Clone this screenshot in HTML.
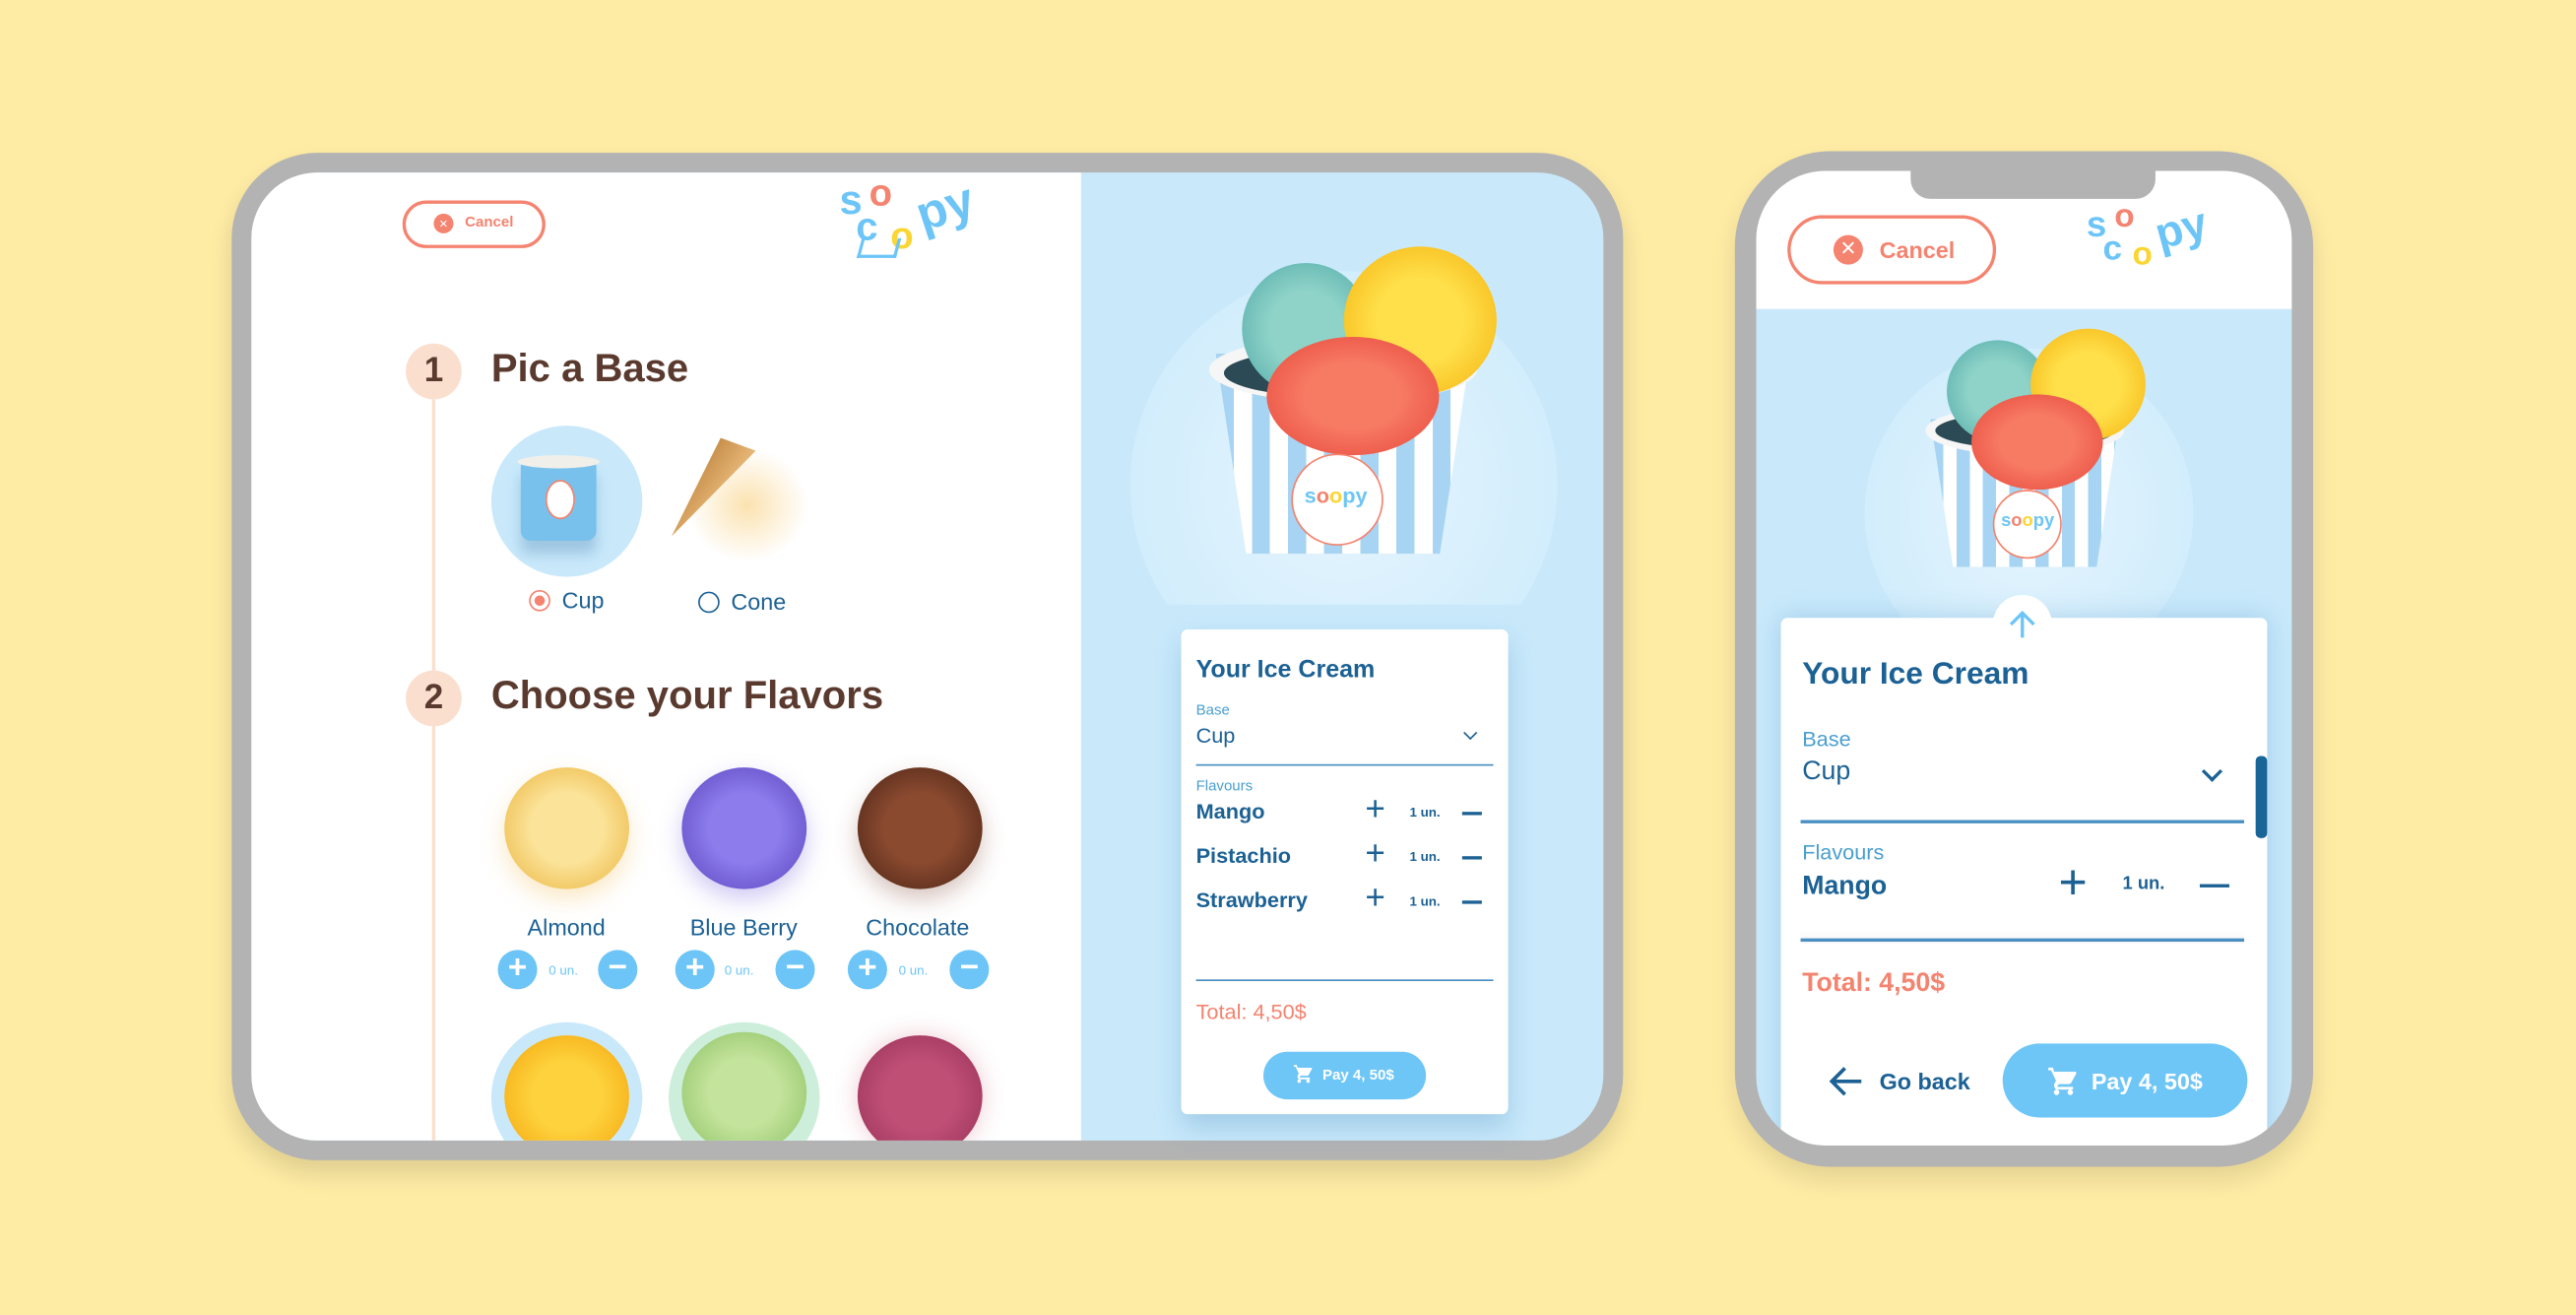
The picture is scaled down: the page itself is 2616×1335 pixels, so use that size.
<!DOCTYPE html>
<html><head><meta charset="utf-8"><style>
*{margin:0;padding:0;box-sizing:border-box}
html,body{width:2616px;height:1334px;overflow:hidden;background:#feeba4}
#w{position:absolute;left:0;top:0;width:1568px;height:800px;transform:scale(1.66837);transform-origin:0 0;font-family:"Liberation Sans",sans-serif}
.a{position:absolute}
.t{position:absolute;white-space:nowrap;font-weight:bold}
.b{color:#1c6194}
.scoop{position:absolute;border-radius:50%}
.pl{position:absolute;width:24px;height:24px;border-radius:50%;background:#6cc5f6;color:#fff;font-size:20px;line-height:23px;text-align:center;font-weight:bold}
</style></head><body><div id="w">

<!-- TABLET -->
<div class="a" style="left:141px;top:93px;width:847px;height:613px;border-radius:52px;background:#b3b3b3;box-shadow:0 8px 14px rgba(0,0,0,.12)"></div>
<div class="a" style="left:153px;top:105px;width:823px;height:589px;border-radius:40px;background:#c9e9fb;overflow:hidden">
 <div class="a" style="left:0;top:0;width:505px;height:589px;background:#fff"></div>
</div>
<!-- cancel -->
<div class="a" style="left:245px;top:122px;width:87px;height:29px;border:2px solid #f4836f;border-radius:15px"></div>
<div class="a" style="left:264px;top:130px;width:12px;height:12px;border-radius:50%;background:#f4836f;color:#fff;font-size:9px;line-height:12px;text-align:center">×</div>
<div class="t" style="left:283px;top:130px;font-size:9px;color:#f4836f">Cancel</div>
<!-- logo -->
<div class="t" style="left:511px;top:108px;font-size:25px;color:#6cc5f6">s</div>
<div class="t" style="left:529px;top:104px;font-size:23px;color:#f4836f">o</div>
<div class="t" style="left:521px;top:125px;font-size:24px;color:#6cc5f6">c</div>
<div class="t" style="left:542px;top:130px;font-size:23px;color:#fbd532">o</div>
<div class="t" style="left:558px;top:110px;font-size:30px;color:#6cc5f6;transform:rotate(-18deg)">py</div>
<div class="a" style="left:523px;top:145px;width:24px;height:12px;border:2px solid #6cc5f6;border-top:none;transform:skewX(-15deg)"></div>
<!-- step 1 -->
<div class="a" style="left:263px;top:243px;width:2px;height:451px;background:#fadfcf"></div>
<div class="a" style="left:247px;top:209px;width:34px;height:34px;border-radius:50%;background:#fadfcf;color:#5a3a2e;font-size:21px;font-weight:bold;text-align:center;line-height:34px">1</div>
<div class="t" style="left:299px;top:211px;font-size:24px;color:#5a3a2e">Pic a Base</div>
<div class="a" style="left:299px;top:259px;width:92px;height:92px;border-radius:50%;background:#c9e9fb"></div>
<div class="a" style="left:317px;top:281px;width:46px;height:48px;background:#78c1ec;border-radius:3px 3px 6px 6px;box-shadow:0 8px 8px rgba(60,120,170,.3)"></div>
<div class="a" style="left:315px;top:277px;width:50px;height:8px;background:#f1efe9;border-radius:50%"></div>
<div class="a" style="left:332px;top:292px;width:18px;height:24px;border-radius:50%;background:#fff;border:1px solid #f4836f"></div>
<div class="a" style="left:415px;top:270px;width:80px;height:75px;border-radius:50%;background:radial-gradient(#fbe2b0 0%,rgba(255,255,255,0) 65%)"></div>
<div class="a" style="left:440px;top:268px;width:22px;height:72px;background:linear-gradient(90deg,#c8904c,#e7b777);clip-path:polygon(0 8%,100% 0,45% 100%);transform:rotate(35deg);transform-origin:50% 0"></div>
<div class="a" style="left:322px;top:359px;width:13px;height:13px;border-radius:50%;border:1.5px solid #f4836f;background:radial-gradient(#f4836f 38%,#fff 42%)"></div>
<div class="t b" style="left:342px;top:357px;font-size:14px;font-weight:normal">Cup</div>
<div class="a" style="left:425px;top:360px;width:13px;height:13px;border-radius:50%;border:1.5px solid #1c6194"></div>
<div class="t b" style="left:445px;top:358px;font-size:14px;font-weight:normal">Cone</div>
<!-- step 2 -->
<div class="a" style="left:247px;top:408px;width:34px;height:34px;border-radius:50%;background:#fadfcf;color:#5a3a2e;font-size:21px;font-weight:bold;text-align:center;line-height:34px">2</div>
<div class="t" style="left:299px;top:410px;font-size:24px;color:#5a3a2e">Choose your Flavors</div>
<div class="scoop" style="left:307px;top:467px;width:76px;height:74px;background:radial-gradient(#fbe49a 40%,#f0c25a 80%);box-shadow:0 6px 14px rgba(240,190,90,.35)"></div>
<div class="scoop" style="left:415px;top:467px;width:76px;height:74px;background:radial-gradient(#8c7cec 40%,#6a56cc 80%);box-shadow:0 6px 14px rgba(120,100,220,.35)"></div>
<div class="scoop" style="left:522px;top:467px;width:76px;height:74px;background:radial-gradient(#8a4a30 40%,#5e2f1d 80%);box-shadow:0 6px 14px rgba(120,60,40,.3)"></div>
<div class="t b" style="left:321px;top:556px;font-size:14px;font-weight:normal">Almond</div>
<div class="t b" style="left:420px;top:556px;font-size:14px;font-weight:normal">Blue Berry</div>
<div class="t b" style="left:527px;top:556px;font-size:14px;font-weight:normal">Chocolate</div>
<div class="pl" style="left:303px;top:578px">+</div><div class="t" style="left:334px;top:586px;font-size:8px;color:#6cc5f6;font-weight:normal">0 un.</div><div class="pl" style="left:364px;top:578px">−</div>
<div class="pl" style="left:411px;top:578px">+</div><div class="t" style="left:441px;top:586px;font-size:8px;color:#6cc5f6;font-weight:normal">0 un.</div><div class="pl" style="left:472px;top:578px">−</div>
<div class="pl" style="left:516px;top:578px">+</div><div class="t" style="left:547px;top:586px;font-size:8px;color:#6cc5f6;font-weight:normal">0 un.</div><div class="pl" style="left:578px;top:578px">−</div>
<div class="a" style="left:153px;top:600px;width:505px;height:94px;overflow:hidden;border-bottom-left-radius:40px">
 <div class="a" style="left:146px;top:22px;width:92px;height:92px;border-radius:50%;background:#c9e9fb"></div>
 <div class="scoop" style="left:154px;top:30px;width:76px;height:74px;background:radial-gradient(#fdd23c 40%,#f7b21c 80%)"></div>
 <div class="a" style="left:254px;top:22px;width:92px;height:92px;border-radius:50%;background:#cdeedb"></div>
 <div class="scoop" style="left:262px;top:28px;width:76px;height:74px;background:radial-gradient(#c4e39c 40%,#9ccb74 80%)"></div>
 <div class="scoop" style="left:369px;top:30px;width:76px;height:74px;background:radial-gradient(#c04f76 40%,#a33a60 80%);box-shadow:0 0 14px rgba(200,80,110,.3)"></div>
</div>
<!-- big ice cream -->
<div class="a" style="left:688px;top:165px;width:260px;height:260px;border-radius:50%;background:radial-gradient(#e6f5fe,#d2edfc 70%);clip-path:inset(0 0 22% 0)"></div>
<div class="a" style="left:740px;top:215px;width:155px;height:122px;clip-path:polygon(0 0,100% 0,88% 100%,12% 100%);background:repeating-linear-gradient(90deg,#a7d4f2 0 11px,#fff 11px 22px);border-radius:0 0 20px 20px;box-shadow:0 10px 10px rgba(80,150,200,.3)"></div>
<div class="a" style="left:736px;top:205px;width:163px;height:40px;border-radius:50%;background:#f6f6f6"></div>
<div class="a" style="left:745px;top:212px;width:145px;height:30px;border-radius:50%;background:#2b4a55"></div>
<div class="scoop" style="left:756px;top:160px;width:78px;height:80px;background:radial-gradient(#8fd3c8 40%,#5fb3b0 85%)"></div>
<div class="scoop" style="left:818px;top:150px;width:93px;height:90px;background:radial-gradient(#ffe04a 40%,#f6bc1c 85%)"></div>
<div class="scoop" style="left:771px;top:205px;width:105px;height:72px;background:radial-gradient(#f77a63 40%,#ea5244 85%)"></div>
<div class="a" style="left:786px;top:276px;width:56px;height:56px;border-radius:50%;background:#fff;border:1.5px solid #f4836f"></div>
<div class="t" style="left:794px;top:294px;font-size:13px;color:#6cc5f6">s<span style="color:#f4836f">o</span><span style="color:#fbd532">o</span>py</div>
<!-- card -->
<div class="a" style="left:719px;top:383px;width:199px;height:295px;background:#fff;border-radius:4px;box-shadow:0 8px 16px rgba(70,140,190,.3)"></div>
<div class="t b" style="left:728px;top:399px;font-size:15px">Your Ice Cream</div>
<div class="t" style="left:728px;top:427px;font-size:9px;color:#4a9fd0;font-weight:normal">Base</div>
<div class="t b" style="left:728px;top:440px;font-size:13px;font-weight:normal">Cup</div>
<div class="a" style="left:892px;top:443px;width:6px;height:6px;border-right:1.5px solid #1c6194;border-bottom:1.5px solid #1c6194;transform:rotate(45deg)"></div>
<div class="a" style="left:728px;top:465px;width:181px;height:1px;background:#4a8fc2"></div>
<div class="t" style="left:728px;top:473px;font-size:9px;color:#4a9fd0;font-weight:normal">Flavours</div>
<div class="t b" style="left:728px;top:486px;font-size:13px">Mango</div>
<div class="t b" style="left:728px;top:513px;font-size:13px">Pistachio</div>
<div class="t b" style="left:728px;top:540px;font-size:13px">Strawberry</div>
<div class="t b" style="left:831px;top:481px;font-size:21px;font-weight:normal">+</div><div class="t b" style="left:858px;top:490px;font-size:8px">1 un.</div><div class="a" style="left:890px;top:494px;width:12px;height:1.5px;background:#1c6194"></div>
<div class="t b" style="left:831px;top:508px;font-size:21px;font-weight:normal">+</div><div class="t b" style="left:858px;top:517px;font-size:8px">1 un.</div><div class="a" style="left:890px;top:521px;width:12px;height:1.5px;background:#1c6194"></div>
<div class="t b" style="left:831px;top:535px;font-size:21px;font-weight:normal">+</div><div class="t b" style="left:858px;top:544px;font-size:8px">1 un.</div><div class="a" style="left:890px;top:548px;width:12px;height:1.5px;background:#1c6194"></div>
<div class="a" style="left:728px;top:596px;width:181px;height:1px;background:#4a8fc2"></div>
<div class="t" style="left:728px;top:608px;font-size:13px;color:#f4836f;font-weight:normal">Total: 4,50$</div>
<div class="a" style="left:769px;top:640px;width:99px;height:29px;border-radius:15px;background:#6ec6f7"></div>
<svg class="a" style="left:787px;top:647px" width="13" height="13" viewBox="0 0 24 24"><path fill="#fff" d="M7 18a2 2 0 1 0 0 4 2 2 0 0 0 0-4zM1 2v2h2l3.6 7.6-1.4 2.4C5 16.1 6 18 7.5 18H19v-2H7.4l1.1-2h7.5c.8 0 1.4-.4 1.7-1l3.6-6.5A1 1 0 0 0 20.4 5H5.2L4.3 2H1zm16 16a2 2 0 1 0 0 4 2 2 0 0 0 0-4z"/></svg>
<div class="t" style="left:805px;top:649px;font-size:9px;color:#fff">Pay 4, 50$</div>

<!-- PHONE -->
<div class="a" style="left:1056px;top:92px;width:352px;height:618px;border-radius:58px;background:#b3b3b3;box-shadow:0 8px 14px rgba(0,0,0,.1)"></div>
<div class="a" style="left:1069px;top:104px;width:326px;height:593px;border-radius:42px;background:#c9e9fb;overflow:hidden">
 <div class="a" style="left:0;top:0;width:326px;height:84px;background:#fff"></div>
 <div class="a" style="left:94px;top:0;width:149px;height:17px;background:#b3b3b3;border-radius:0 0 12px 12px"></div>
 <div class="a" style="left:66px;top:108px;width:200px;height:200px;border-radius:50%;background:radial-gradient(#e6f5fe,#d2edfc 70%)"></div>
 <div class="a" style="left:15px;top:272px;width:296px;height:330px;background:#fff;border-radius:4px;box-shadow:0 0 16px rgba(70,140,190,.3)"></div>
</div>
<div class="a" style="left:1088px;top:131px;width:127px;height:42px;border:2.5px solid #f4836f;border-radius:21px"></div>
<div class="a" style="left:1116px;top:143px;width:18px;height:18px;border-radius:50%;background:#f4836f;color:#fff;font-size:16px;line-height:17px;text-align:center">×</div>
<div class="t" style="left:1144px;top:144px;font-size:14px;color:#f4836f">Cancel</div>
<div class="t" style="left:1270px;top:124px;font-size:22px;color:#6cc5f6">s</div>
<div class="t" style="left:1287px;top:121px;font-size:20px;color:#f4836f">o</div>
<div class="t" style="left:1280px;top:140px;font-size:21px;color:#6cc5f6">c</div>
<div class="t" style="left:1298px;top:144px;font-size:20px;color:#fbd532">o</div>
<div class="t" style="left:1312px;top:124px;font-size:27px;color:#6cc5f6;transform:rotate(-15deg)">py</div>
<!-- phone ice cream -->
<div class="a" style="left:1175px;top:255px;width:115px;height:90px;clip-path:polygon(0 0,100% 0,88% 100%,12% 100%);background:repeating-linear-gradient(90deg,#a7d4f2 0 8px,#fff 8px 16px);box-shadow:0 8px 8px rgba(80,150,200,.3)"></div>
<div class="a" style="left:1172px;top:247px;width:121px;height:30px;border-radius:50%;background:#f6f6f6"></div>
<div class="a" style="left:1178px;top:251px;width:109px;height:22px;border-radius:50%;background:#2b4a55"></div>
<div class="scoop" style="left:1185px;top:207px;width:62px;height:62px;background:radial-gradient(#8fd3c8 40%,#5fb3b0 85%)"></div>
<div class="scoop" style="left:1236px;top:200px;width:70px;height:68px;background:radial-gradient(#ffe04a 40%,#f6bc1c 85%)"></div>
<div class="scoop" style="left:1200px;top:240px;width:80px;height:58px;background:radial-gradient(#f77a63 40%,#ea5244 85%)"></div>
<div class="a" style="left:1213px;top:298px;width:42px;height:42px;border-radius:50%;background:#fff;border:1.5px solid #f4836f"></div>
<div class="t" style="left:1218px;top:311px;font-size:11px;color:#6cc5f6">s<span style="color:#f4836f">o</span><span style="color:#fbd532">o</span>py</div>
<div class="a" style="left:1213px;top:362px;width:36px;height:36px;border-radius:50%;background:#fff"></div>
<svg class="a" style="left:1221px;top:370px" width="20" height="20" viewBox="0 0 20 20"><path d="M10 18V3M3 10l7-7 7 7" stroke="#6cc5f6" stroke-width="2" fill="none"/></svg>
<div class="t b" style="left:1097px;top:400px;font-size:19px">Your Ice Cream</div>
<div class="t" style="left:1097px;top:442px;font-size:13px;color:#4a9fd0;font-weight:normal">Base</div>
<div class="t b" style="left:1097px;top:461px;font-size:16px;font-weight:normal">Cup</div>
<div class="a" style="left:1342px;top:465px;width:9px;height:9px;border-right:2px solid #1c6194;border-bottom:2px solid #1c6194;transform:rotate(45deg)"></div>
<div class="a" style="left:1096px;top:499px;width:270px;height:1.5px;background:#4a8fc2"></div>
<div class="a" style="left:1373px;top:460px;width:7px;height:50px;border-radius:3px;background:#1a6598"></div>
<div class="t" style="left:1097px;top:511px;font-size:13px;color:#4a9fd0;font-weight:normal">Flavours</div>
<div class="t b" style="left:1097px;top:531px;font-size:16px">Mango</div>
<div class="t b" style="left:1253px;top:521px;font-size:30px;font-weight:normal">+</div>
<div class="t b" style="left:1292px;top:532px;font-size:11px">1 un.</div>
<div class="a" style="left:1339px;top:538px;width:18px;height:2px;background:#1c6194"></div>
<div class="a" style="left:1096px;top:566px;width:270px;height:8px;background:linear-gradient(#fff,rgba(0,0,0,.04))"></div>
<div class="a" style="left:1096px;top:571px;width:270px;height:1.5px;background:#4a8fc2"></div>
<div class="t" style="left:1097px;top:590px;font-size:16px;color:#f4836f">Total: 4,50$</div>
<svg class="a" style="left:1113px;top:647px" width="22" height="22" viewBox="0 0 22 22"><path d="M20 11H3M10 3l-8 8 8 8" stroke="#1c6194" stroke-width="2.2" fill="none"/></svg>
<div class="t b" style="left:1144px;top:650px;font-size:14px">Go back</div>
<div class="a" style="left:1219px;top:635px;width:149px;height:45px;border-radius:23px;background:#6ec6f7"></div>
<svg class="a" style="left:1246px;top:648px" width="20" height="20" viewBox="0 0 24 24"><path fill="#fff" d="M7 18a2 2 0 1 0 0 4 2 2 0 0 0 0-4zM1 2v2h2l3.6 7.6-1.4 2.4C5 16.1 6 18 7.5 18H19v-2H7.4l1.1-2h7.5c.8 0 1.4-.4 1.7-1l3.6-6.5A1 1 0 0 0 20.4 5H5.2L4.3 2H1zm16 16a2 2 0 1 0 0 4 2 2 0 0 0 0-4z"/></svg>
<div class="t" style="left:1273px;top:650px;font-size:14px;color:#fff">Pay 4, 50$</div>

</div></body></html>
